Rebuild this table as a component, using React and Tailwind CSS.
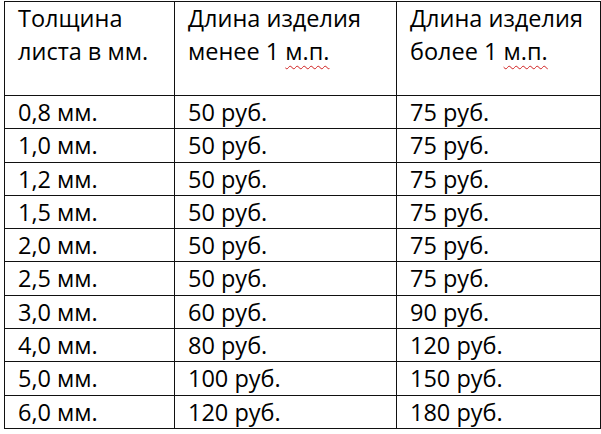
const rows = [
  ["0,8 мм.", "50 руб.", "75 руб."],
  ["1,0 мм.", "50 руб.", "75 руб."],
  ["1,2 мм.", "50 руб.", "75 руб."],
  ["1,5 мм.", "50 руб.", "75 руб."],
  ["2,0 мм.", "50 руб.", "75 руб."],
  ["2,5 мм.", "50 руб.", "75 руб."],
  ["3,0 мм.", "60 руб.", "90 руб."],
  ["4,0 мм.", "80 руб.", "120 руб."],
  ["5,0 мм.", "100 руб.", "150 руб."],
  ["6,0 мм.", "120 руб.", "180 руб."],
];

function Mp() {
  return (
    <span className="underline decoration-wavy decoration-[#d02020] decoration-1 underline-offset-[5px]">
      м.п.
    </span>
  );
}

export default function App() {
  const cell = "border-r border-b border-[#111] pl-[13px] leading-[33px] whitespace-nowrap";
  return (
    <div className="w-[601px] h-[434px] bg-white pl-[4px] pt-[1px] overflow-hidden">
      <div
        className="grid grid-cols-[170px_222px_204px] grid-rows-[94px_repeat(10,33.3px)] w-[597px] border-l border-t border-[#111] text-[23.5px] text-black"
        style={{ fontFamily: '"Open Sans", "Noto Sans", sans-serif' }}
      >
        {/* header */}
        <div className={cell}>
          <div>Толщина</div>
          <div>листа в мм.</div>
        </div>
        <div className={cell}>
          <div>Длина изделия</div>
          <div>
            менее 1 <Mp />
          </div>
        </div>
        <div className={cell}>
          <div>Длина изделия</div>
          <div>
            более 1 <Mp />
          </div>
        </div>

        {/* prices */}
        {rows.map((r) =>
          r.map((v, i) => (
            <div key={r[0] + i} className={cell}>
              {v}
            </div>
          ))
        )}
      </div>
    </div>
  );
}
